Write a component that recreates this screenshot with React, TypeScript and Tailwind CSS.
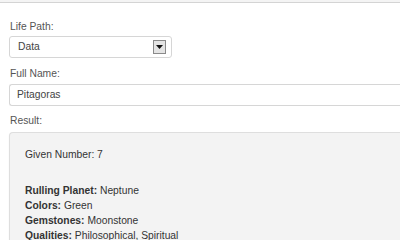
export default function App() {
  const font = { fontFamily: '"Liberation Sans", Arial, sans-serif' };
  return (
    <div className="w-[400px] h-[240px] overflow-hidden bg-white text-[10.3px] text-[#333]" style={font}>
      <div className="h-[3px] border-b border-[#d4d4d4] bg-[#f4f4f4]" />
      <div className="pl-[9px] pt-[17px]">
        <div className="pl-[1px] text-[#555] leading-[14px]">Life Path:</div>
        <div className="mt-[2px] w-[163px] h-[22px] border border-[#d6d6d6] rounded-[3px] flex items-center pl-[8px] pr-[5px] justify-between text-[#444]">
          <span>Data</span>
          <div className="w-[13px] h-[14px] border border-[#8a8a8a] bg-[#e4e4e4] flex items-center justify-center">
            <svg width="7" height="4" viewBox="0 0 7 4"><path d="M0 0h7L3.5 4z" fill="#111" /></svg>
          </div>
        </div>
        <div className="mt-[9px] pl-[1px] text-[#555] leading-[14px]">Full Name:</div>
        <div className="mt-[3px] h-[22px] border border-[#d6d6d6] border-r-0 rounded-l-[3px] flex items-center pl-[7px] text-[#444]">
          Pitagoras
        </div>
        <div className="mt-[8px] pl-[1px] text-[#555] leading-[14px]">Result:</div>
        <div className="mt-[4px] h-[120px] bg-[#f3f3f3] border-l border-t border-[#dedede] rounded-tl-[4px] shadow-[0_1px_2px_rgba(0,0,0,0.06)] pl-[15px] pt-[14px] text-[#333]">
          <div className="leading-[15px]">Given Number: 7</div>
          <div className="mt-[21px] leading-[15px]">
            <div><b>Rulling Planet:</b> Neptune</div>
            <div><b>Colors:</b> Green</div>
            <div><b>Gemstones:</b> Moonstone</div>
            <div><b>Qualities:</b> Philosophical, Spiritual</div>
          </div>
        </div>
      </div>
    </div>
  );
}
